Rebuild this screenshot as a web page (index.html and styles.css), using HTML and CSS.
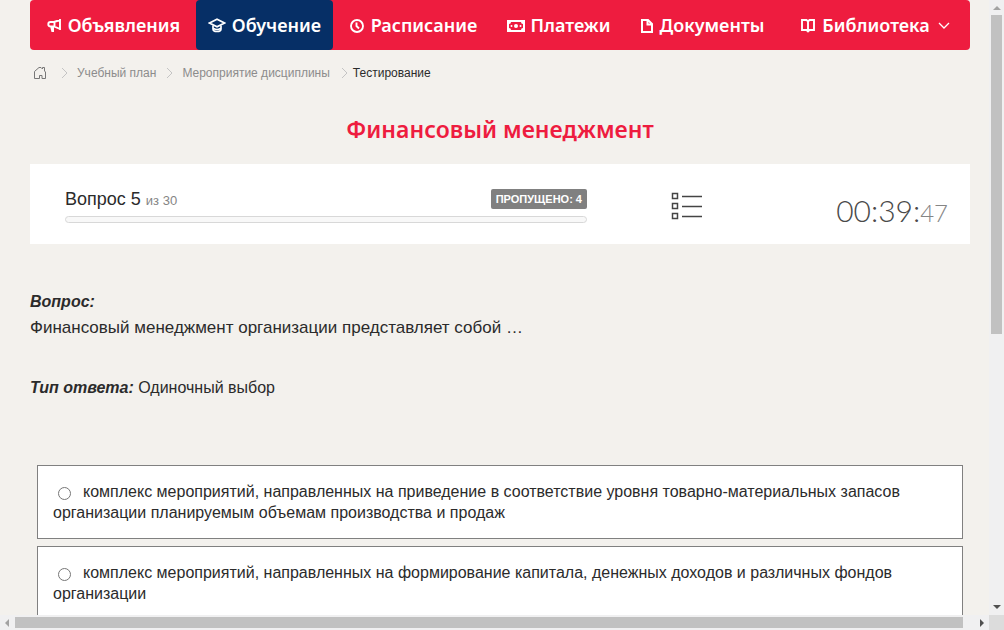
FILE: index.html
```html
<!DOCTYPE html>
<html lang="ru">
<head>
<meta charset="utf-8">
<meta name="viewport" content="width=device-width, initial-scale=1">
<title>Тестирование</title>
<link rel="stylesheet" href="styles.css">
</head>
<body>
<div class="viewport">
  <div class="page">
    <nav class="menu">
      <a class="menu-item" href="#"><svg class="menu-icon" width="16" height="16" viewBox="0 0 16 16"><path d="M14 2v11M14 3 8 5H4.500a2.200 2.200 0 0 0 0 4.400H8l6 2.600M8.500 5v4.500" stroke-width="1.900"/><path class="solid" d="M4 9h4v6H5.500z"/></svg>Объявления</a>
      <a class="menu-item active" href="#"><svg class="menu-icon" width="18" height="16" viewBox="0 0 18 16"><path d="M1.500 6 9 2.200 16.500 6 9 9.800z" stroke-width="1.700"/><path d="M5 8.500V12q0 2.500 4 2.500t4-2.500V8.500M5.500 11.500Q9 13.500 12.500 11.500" stroke-width="1.700"/></svg>Обучение</a>
      <a class="menu-item" href="#"><svg class="menu-icon" width="16" height="16" viewBox="0 0 16 16"><circle cx="8" cy="9" r="6" stroke-width="1.900"/><path d="M7.500 5.500V9l2.500 2.500" stroke-width="1.900"/></svg>Расписание</a>
      <a class="menu-item" href="#"><svg class="menu-icon" width="18" height="16" viewBox="0 0 18 16"><path class="solid" fill-rule="evenodd" d="M0 3h18v12H0zM4 5a2 2 0 0 1-2 2v4a2 2 0 0 1 2 2h10a2 2 0 0 1 2-2V7a2 2 0 0 1-2-2z"/><circle class="solid" cx="9" cy="9" r="2"/><circle class="solid" cx="4.500" cy="9" r="1"/><circle class="solid" cx="13.500" cy="9" r="1"/></svg>Платежи</a>
      <a class="menu-item" href="#"><svg class="menu-icon" width="14" height="16" viewBox="0 0 14 16"><path d="M2 3h6l4 4v8H2zM7.500 3v4.500H12" stroke-width="2"/></svg>Документы</a>
      <a class="menu-item" href="#"><svg class="menu-icon" width="16" height="16" viewBox="0 0 16 16"><path d="M2 3h4.500L8 4.500 9.500 3H14v10H9.500L8 14.500 6.500 13H2zM8 4v11" stroke-width="1.900"/></svg>Библиотека<svg class="menu-chevron" width="12" height="8" viewBox="0 0 12 8"><path d="m1 2 5 5 5-5"/></svg></a>
    </nav>

    <nav class="crumbs" aria-label="Навигация">
      <a class="home" href="#" aria-label="Главная"><svg width="14" height="14" viewBox="0 0 14 14"><path d="M1.500 5.500 6 1.500h2l1.500 1.500V1.500h2V5l1 1v6.500H9v-3H6.500v3h-5z"/></svg></a>
      <svg class="sep" width="8" height="12" viewBox="0 0 8 12"><path d="m1 1 5 5-5 5"/></svg>
      <a href="#">Учебный план</a>
      <svg class="sep" width="8" height="12" viewBox="0 0 8 12"><path d="m1 1 5 5-5 5"/></svg>
      <a href="#">Мероприятие дисциплины</a>
      <svg class="sep last" width="8" height="12" viewBox="0 0 8 12"><path d="m1 1 5 5-5 5"/></svg>
      <span class="current">Тестирование</span>
    </nav>

    <h1 class="title">Финансовый менеджмент</h1>

    <section class="status">
      <div class="progress-block">
        <div class="progress-head">
          <div class="counter">Вопрос 5 <small>из 30</small></div>
          <span class="skipped">ПРОПУЩЕНО: 4</span>
        </div>
        <div class="progress" role="progressbar" aria-label="Прогресс"></div>
      </div>
      <button class="list-button" type="button" aria-label="Список вопросов"><svg width="32" height="28" viewBox="0 0 32 28"><path d="M1.500 1.500h5v5h-5zM1.500 11.500h5v5h-5zM1.500 21.500h5v5h-5zM11 4.500h20M11 14.500h20M11 24.500h20"/></svg></button>
      <div class="timer">00:39:<small>47</small></div>
    </section>

    <main class="question">
      <div class="label">Вопрос:</div>
      <p class="question-text">Финансовый менеджмент организации представляет собой …</p>
      <p class="answer-type"><span class="label">Тип ответа:</span> Одиночный выбор</p>
      <div class="answers">
        <label class="answer"><input type="radio" name="answer">комплекс мероприятий, направленных на приведение в соответствие уровня товарно-материальных запасов организации планируемым объемам производства и продаж</label>
        <label class="answer"><input type="radio" name="answer">комплекс мероприятий, направленных на формирование капитала, денежных доходов и различных фондов организации</label>
      </div>
    </main>
  </div>
  <div class="bar vertical">
    <svg width="15" height="15" viewBox="0 0 15 15"><path class="muted" d="M4 10h8L8 6z"/></svg>
    <div class="track"><div class="thumb"></div></div>
    <svg width="15" height="15" viewBox="0 0 15 15"><path d="M4 5h8L8 9z"/></svg>
  </div>
  <div class="bar horizontal">
    <svg width="15" height="15" viewBox="0 0 15 15"><path class="muted" d="M9 4v8L5 8z"/></svg>
    <div class="track"><div class="thumb"></div></div>
    <svg width="15" height="15" viewBox="0 0 15 15"><path d="M6 4v8l4-4z"/></svg>
  </div>
  <div class="corner"></div>
</div>
</body>
</html>
```
FILE: styles.css
```css
* { box-sizing: border-box; }

body {
  margin: 0;
  background: #f3f1ed;
  color: #2b2b2b;
  font: 16px/21px "Liberation Sans", Arial, sans-serif;
}

a { color: inherit; text-decoration: none; }
svg { flex: none; fill: none; stroke: currentColor; }
.solid { fill: currentColor; stroke: none; }

.viewport {
  display: grid;
  grid-template: minmax(0, 1fr) 15px / minmax(0, 1fr) 15px;
  height: 100vh;
}

.page { overflow: hidden; padding: 0 19px 0 30px; }

.menu {
  display: grid;
  grid-template-columns: 166fr 137fr 160fr 131fr 156fr 190fr;
  height: 50px;
  border-radius: 4px;
  background: #ee1c3f;
  color: #fff;
  font: 600 18px/50px "Noto Sans", "Open Sans", sans-serif;
}
.menu-item {
  display: flex;
  align-items: center;
  justify-content: center;
  gap: 6px;
  border-radius: 4px;
  white-space: nowrap;
}
.menu-item.active { background: #062f66; }
.menu-chevron { margin-left: 2px; stroke-width: 1.300; }

.crumbs {
  display: flex;
  align-items: center;
  height: 46px;
  padding-left: 3px;
  color: #8c8c8c;
  font-size: 12px;
  white-space: nowrap;
}
.home { display: flex; color: #777; }
.sep { margin: 0 8px 0 10px; color: #c4c4c4; }
.home + .sep { margin-left: 14px; }
.sep.last { margin: 0 4px 0 11px; }
.current { color: #2b2b2b; }

.title {
  margin: 14px 0 16px;
  color: #ee1c3f;
  text-align: center;
  font: 600 23px/38px "Noto Sans", "Open Sans", sans-serif;
}

.status {
  display: grid;
  grid-template-columns: 522fr 200fr 161fr;
  height: 80px;
  padding: 0 22px 0 35px;
  background: #fff;
}
.progress-block { padding-top: 25px; }
.progress-head { display: flex; justify-content: space-between; height: 27px; }
.counter { font-size: 18px; line-height: 20px; }
.counter small { color: #858585; font-size: 13px; }
.skipped {
  height: 20px;
  padding: 0 5px;
  border-radius: 2px;
  background: #808080;
  color: #fff;
  font-size: 11px;
  font-weight: bold;
  line-height: 20px;
}
.progress {
  height: 7px;
  border: 1px solid #d8d8d8;
  border-radius: 4px;
  background: #f8f8f8;
}
.list-button {
  display: flex;
  align-self: start;
  justify-self: center;
  margin-top: 28px;
  padding: 0;
  border: 0;
  background: none;
  color: #444;
  stroke-width: 1.500;
}
.timer {
  padding-top: 6px;
  color: #4a4a4a;
  text-align: right;
  font: 300 30px/80px Lato, sans-serif;
  white-space: nowrap;
}
.timer small { color: #858585; font-size: 24px; }

.question { padding-top: 47px; }
.label { font-style: italic; font-weight: bold; }
.question-text { margin: 4px 0 38px; font-size: 17px; line-height: 23px; }
.answer-type { margin: 0 0 67px; }
.answers { display: grid; gap: 7px; padding: 0 7px; }
.answer {
  display: block;
  padding: 15px;
  border: 1px solid #808080;
  background: #fff;
}
.answer input { margin: 0 12px 0 5px; vertical-align: -3px; }

.bar { display: flex; background: #f0f0f1; color: #505050; }
.bar svg { fill: currentColor; stroke: none; }
.bar .muted { fill: #a3a3a3; }
.bar .track { display: flex; flex: 1; }
.bar .thumb { background: #c1c1c1; }
.vertical { flex-direction: column; }
.vertical .track { padding: 0 2px; }
.vertical .thumb { width: 100%; height: 54.5%; }
.horizontal .track { padding: 2px 0; }
.horizontal .thumb { width: 98.9%; }
.corner { background: #dcdcdc; }
```
